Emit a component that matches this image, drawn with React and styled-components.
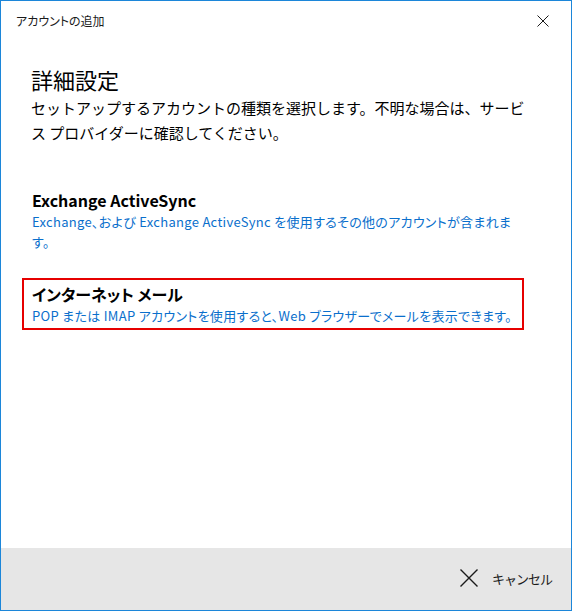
import styled, { createGlobalStyle } from "styled-components";

const GlobalStyle = createGlobalStyle`
  html, body {
    margin: 0;
    padding: 0;
    background: #ffffff;
  }
  body {
    font-family: "Noto Sans CJK JP", "Noto Sans", sans-serif;
    font-feature-settings: "palt";
    color: #000000;
  }
`;

const Window = styled.div`
  width: 572px;
  height: 611px;
  box-sizing: border-box;
  border: 1px solid #1c86d9;
  display: flex;
  flex-direction: column;
  background: #ffffff;
`;

const TitleBar = styled.div`
  height: 39px;
  display: flex;
  align-items: center;
  justify-content: space-between;
  padding: 0 22px 0 15px;
  font-size: 12px;
  color: #1a1a1a;
`;

const CloseButton = styled.button`
  border: none;
  background: transparent;
  padding: 0;
  width: 12px;
  height: 12px;
  display: flex;
  cursor: pointer;
`;

const Content = styled.div`
  flex: 1;
  padding: 23px 0 0 21px;
  display: flex;
  flex-direction: column;
`;

const Heading = styled.h1`
  margin: 0 0 0 9px;
  font-size: 22px;
  line-height: 32px;
  font-weight: 400;
`;

const Lead = styled.p`
  margin: 0 0 0 9px;
  width: 498px;
  font-size: 15px;
  line-height: 25px;
  font-feature-settings: normal;
`;

const Options = styled.div`
  margin-top: 39px;
  display: flex;
  flex-direction: column;
  gap: 22px;
`;

const Option = styled.div`
  width: 502px;
  box-sizing: border-box;
  border: 2px solid ${(props) => (props.$selected ? "#e60000" : "transparent")};
  padding: 2px 8px;
  cursor: pointer;
`;

const OptionTitle = styled.div`
  font-size: 16px;
  line-height: 24px;
  font-weight: 700;
  color: #000000;
`;

const OptionText = styled.div`
  font-size: 13px;
  line-height: 20px;
  letter-spacing: 0.3px;
  color: #0a6fcc;
`;

const Footer = styled.div`
  height: 60px;
  background: #e6e6e6;
  display: flex;
  align-items: center;
  justify-content: flex-end;
  padding: 0 19px 2px 0;
`;

const CancelButton = styled.button`
  border: none;
  background: transparent;
  display: flex;
  align-items: center;
  gap: 14px;
  padding: 0;
  font-family: inherit;
  font-size: 13px;
  letter-spacing: -1px;
  color: #1a1a1a;
  cursor: pointer;
`;

const Cross = ({ size, stroke }) => (
  <svg width={size} height={size} viewBox={`0 0 ${size} ${size}`}>
    <path
      d={`M0.5 0.5 L${size - 0.5} ${size - 0.5} M${size - 0.5} 0.5 L0.5 ${size - 0.5}`}
      stroke="#1a1a1a"
      strokeWidth={stroke}
      fill="none"
    />
  </svg>
);

const App = () => {
  return (
    <>
      <GlobalStyle />
      <Window>
        <TitleBar>
          <span>アカウントの追加</span>
          <CloseButton aria-label="閉じる">
            <Cross size={12} stroke={1} />
          </CloseButton>
        </TitleBar>
        <Content>
          <Heading>詳細設定</Heading>
          <Lead>
            セットアップするアカウントの種類を選択します。不明な場合は、サービス プロバイダーに確認してください。
          </Lead>
          <Options>
            <Option>
              <OptionTitle>Exchange ActiveSync</OptionTitle>
              <OptionText>
                Exchange、および Exchange ActiveSync を使用するその他のアカウントが含まれま
                <br />
                す。
              </OptionText>
            </Option>
            <Option $selected>
              <OptionTitle>インターネット メール</OptionTitle>
              <OptionText>
                POP または IMAP アカウントを使用すると、Web ブラウザーでメールを表示できます。
              </OptionText>
            </Option>
          </Options>
        </Content>
        <Footer>
          <CancelButton>
            <Cross size={18} stroke={1.4} />
            <span>キャンセル</span>
          </CancelButton>
        </Footer>
      </Window>
    </>
  );
};

export default App;
